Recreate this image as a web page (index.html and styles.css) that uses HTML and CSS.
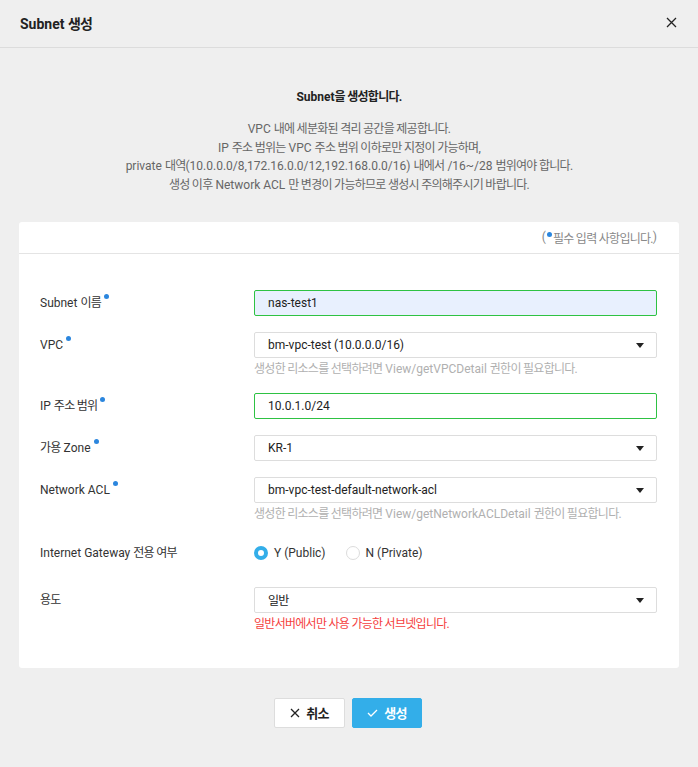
FILE: index.html
```html
<!DOCTYPE html>
<html lang="ko">
<head>
<meta charset="utf-8">
<title>Subnet 생성</title>
<link rel="stylesheet" href="styles.css">
</head>
<body>
<div class="modal">
  <header class="modal-header">
    <h1 class="modal-title">Subnet <span class="ko">생성</span></h1>
    <button class="close-btn" aria-label="닫기">
      <svg width="11" height="11" viewBox="0 0 11 11"><path d="M1 1L10 10M10 1L1 10" stroke="#222" stroke-width="1.3" fill="none"/></svg>
    </button>
  </header>

  <section class="intro">
    <h2 class="intro-title">Subnet<span class="ko">을 생성합니다.</span></h2>
    <p class="intro-text">VPC <span class="ko">내에 세분화된 격리 공간을 제공합니다.</span><br>IP <span class="ko">주소 범위는</span> VPC <span class="ko">주소 범위 이하로만 지정이 가능하며,</span><br>private <span class="ko">대역</span>(10.0.0.0/8,172.16.0.0/12,192.168.0.0/16) <span class="ko">내에서</span> /16~/28 <span class="ko">범위여야 합니다.</span><br><span class="ko">생성 이후</span> Network ACL <span class="ko">만 변경이 가능하므로 생성시 주의해주시기 바랍니다.</span></p>
  </section>

  <div class="card">
    <div class="card-head">(<span class="dot"></span><span class="ko">필수 입력 사항입니다.</span>)</div>
    <div class="card-body">
      <div class="row">
        <div class="label">Subnet <span class="ko">이름</span><span class="dot sup"></span></div>
        <div class="field">
          <div class="input input-ok input-fill">nas-test1</div>
        </div>
      </div>
      <div class="row">
        <div class="label">VPC<span class="dot sup"></span></div>
        <div class="field">
          <div class="input select">bm-vpc-test (10.0.0.0/16)<span class="caret"></span></div>
          <div class="help"><span class="ko">생성한 리소스를 선택하려면</span> View/getVPCDetail <span class="ko">권한이 필요합니다.</span></div>
        </div>
      </div>
      <div class="row">
        <div class="label">IP <span class="ko">주소 범위</span><span class="dot sup"></span></div>
        <div class="field">
          <div class="input input-ok">10.0.1.0/24</div>
        </div>
      </div>
      <div class="row">
        <div class="label"><span class="ko">가용</span> Zone<span class="dot sup"></span></div>
        <div class="field">
          <div class="input select">KR-1<span class="caret"></span></div>
        </div>
      </div>
      <div class="row">
        <div class="label">Network ACL<span class="dot sup"></span></div>
        <div class="field">
          <div class="input select">bm-vpc-test-default-network-acl<span class="caret"></span></div>
          <div class="help"><span class="ko">생성한 리소스를 선택하려면</span> View/getNetworkACLDetail <span class="ko">권한이 필요합니다.</span></div>
        </div>
      </div>
      <div class="row row-radio">
        <div class="label">Internet Gateway <span class="ko">전용 여부</span></div>
        <div class="field radios">
          <label class="radio"><span class="radio-mark checked"></span>Y (Public)</label>
          <label class="radio"><span class="radio-mark"></span>N (Private)</label>
        </div>
      </div>
      <div class="row row-last">
        <div class="label"><span class="ko">용도</span></div>
        <div class="field">
          <div class="input select"><span class="ko">일반</span><span class="caret"></span></div>
          <div class="help help-error"><span class="ko">일반서버에서만 사용 가능한 서브넷입니다.</span></div>
        </div>
      </div>
    </div>
  </div>

  <div class="actions">
    <button class="btn btn-cancel">
      <svg width="10" height="10" viewBox="0 0 10 10"><path d="M1 1L9 9M9 1L1 9" stroke="#222" stroke-width="1.3" fill="none"/></svg>
      <span class="ko">취소</span>
    </button>
    <button class="btn btn-primary">
      <svg width="11" height="8" viewBox="0 0 11 8"><path d="M1 4L4 7L10 1" stroke="#fff" stroke-width="1.3" fill="none"/></svg>
      <span class="ko">생성</span>
    </button>
  </div>
</div>
</body>
</html>
```

FILE: styles.css
```css
* { box-sizing: border-box; }

html, body {
  margin: 0;
  padding: 0;
  background: #efefef;
}

body {
  font-family: Roboto, "Noto Sans CJK KR", sans-serif;
  color: #333;
  font-size: 12px;
  width: 698px;
  height: 767px;
  overflow: hidden;
}

.ko {
  letter-spacing: -0.06em;
}

.modal-header {
  height: 48px;
  border-bottom: 1px solid #dcdcdc;
  display: flex;
  align-items: center;
  justify-content: space-between;
  padding: 0 21px 2px 20px;
}

.modal-title {
  margin: 0;
  font-size: 14px;
  font-weight: 700;
  color: #222;
}

.close-btn {
  border: 0;
  background: none;
  padding: 0;
  width: 11px;
  height: 11px;
  display: flex;
  cursor: pointer;
}

.intro {
  text-align: center;
  padding-top: 40px;
}

.intro-title {
  margin: 0;
  font-size: 12px;
  font-weight: 700;
  line-height: 18px;
  color: #222;
}

.intro-text {
  margin: 14px 0 0;
  font-size: 12px;
  line-height: 18.7px;
  color: #666;
}

.card {
  margin: 27px 19px 0 19px;
  background: #fff;
  border-radius: 3px;
}

.card-head {
  height: 32px;
  border-bottom: 1px solid #e4e4e4;
  display: flex;
  align-items: center;
  justify-content: flex-end;
  padding-right: 22px;
  font-size: 12px;
  color: #888;
}

.dot {
  display: inline-block;
  width: 5px;
  height: 5px;
  border-radius: 50%;
  background: #2b86de;
  margin: 0 1px 5px 1px;
}

.dot.sup {
  margin: 0 0 0 3px;
  vertical-align: top;
  position: relative;
  top: 4px;
}

.card-body {
  padding: 36px 22px 36px 21px;
}

.row {
  display: flex;
  margin-bottom: 16px;
}

.row-radio {
  padding-top: 2px;
  margin-bottom: 21px;
}

.row-last {
  margin-bottom: 0;
}

.label {
  width: 214px;
  flex: none;
  line-height: 26px;
  font-size: 12px;
  color: #333;
}

.field {
  flex: 1;
}

.input {
  height: 26px;
  border: 1px solid #ddd;
  border-radius: 2px;
  padding: 0 13px;
  display: flex;
  align-items: center;
  font-size: 12px;
  color: #222;
  background: #fff;
  position: relative;
}

.input-ok {
  border-color: #2ec243;
}

.input-fill {
  background: #e8f0fe;
}

.caret {
  position: absolute;
  right: 12px;
  top: 10px;
  width: 0;
  height: 0;
  border-left: 4px solid transparent;
  border-right: 4px solid transparent;
  border-top: 5px solid #222;
}

.help {
  margin-top: 4px;
  line-height: 15px;
  font-size: 12px;
  color: #b0b0b0;
}

.help-error {
  color: #f5413e;
}

.radios {
  display: flex;
  align-items: center;
  gap: 20px;
  height: 26px;
}

.radio {
  display: flex;
  align-items: center;
  gap: 6px;
  font-size: 12px;
  color: #333;
}

.radio-mark {
  width: 14px;
  height: 14px;
  border-radius: 50%;
  border: 1px solid #dcdcdc;
  background: #fff;
}

.radio-mark.checked {
  border: 4px solid #33aee9;
  background: #fff;
}

.actions {
  display: flex;
  justify-content: center;
  gap: 7px;
  margin-top: 30px;
  padding-right: 2px;
}

.btn {
  height: 30px;
  border-radius: 2px;
  font-family: Roboto, "Noto Sans CJK KR", sans-serif;
  font-size: 13px;
  font-weight: 700;
  display: flex;
  align-items: center;
  justify-content: center;
  gap: 6px;
  padding: 0;
  cursor: pointer;
}

.btn-cancel {
  width: 71px;
  background: #fff;
  border: 1px solid #dddddd;
  color: #222;
}

.btn-primary {
  width: 70px;
  background: #33aee9;
  border: 1px solid #33aee9;
  color: #fff;
}
```
